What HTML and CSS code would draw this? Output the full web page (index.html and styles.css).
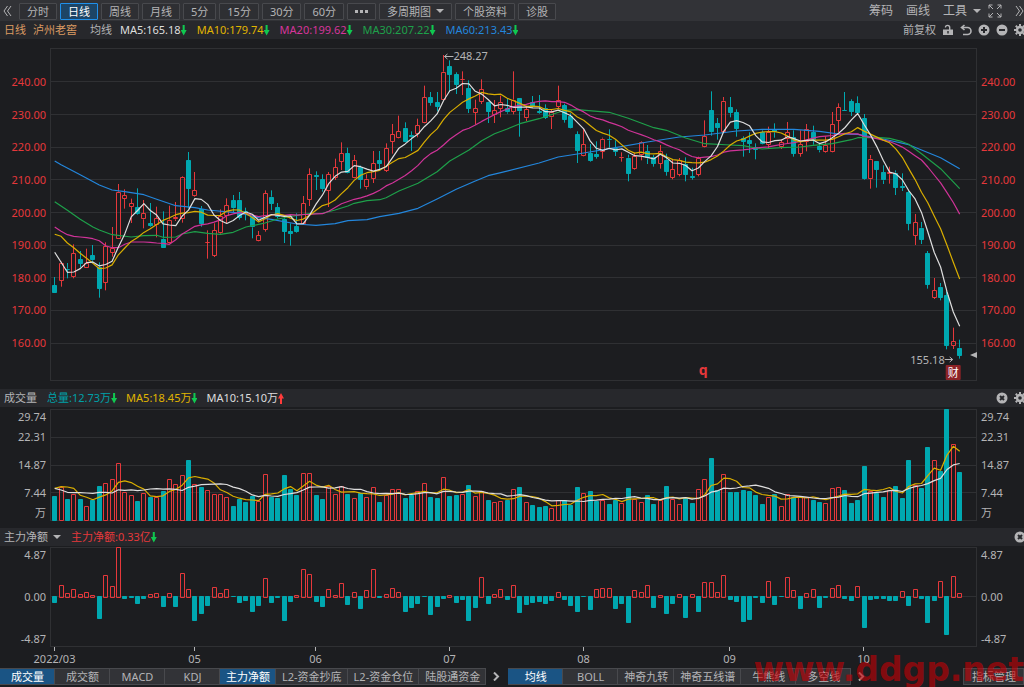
FILE: index.html
```html
<!DOCTYPE html>
<html lang="zh-CN">
  <head>
    <meta charset="UTF-8" />
    <meta name="viewport" content="width=device-width, initial-scale=1.0" />
    <title>泸州老窖 日线</title>
    <link rel="stylesheet" href="styles.css">
  </head>
  <body>
    <!-- Period toolbar -->
    <nav class="toolbar">
      <button class="plain collapse" aria-label="收起">
        <svg width="9" height="12" viewBox="0 0 9 12"><path d="M4.500 1 1 6l3.500 5M8 1 4.500 6 8 11" /></svg>
      </button>
      <div class="periods">
        <button>分时</button>
        <button class="active">日线</button>
        <button>周线</button>
        <button>月线</button>
        <button>5分</button>
        <button>15分</button>
        <button>30分</button>
        <button>60分</button>
        <button class="more" aria-label="更多周期"><i></i><i></i><i></i></button>
        <label class="drop boxed"><select aria-label="多周期图"><option>多周期图</option></select></label>
        <button>个股资料</button>
        <button>诊股</button>
      </div>
      <div class="tools">
        <button class="plain">筹码</button>
        <button class="plain">画线</button>
        <label class="drop"><select aria-label="工具"><option>工具</option></select></label>
        <button class="plain" aria-label="全屏">
          <svg width="14" height="14" viewBox="0 0 14 14"><path d="M1 4.500V1h3.500M1 1l4 4M9.500 1H13v3.500M13 1 9 5M1 9.500V13h3.500M1 13l4-4M13 9.500V13H9.500M13 13 9 9" /></svg>
        </button>
        <button class="plain" aria-label="展开">
          <svg width="9" height="12" viewBox="0 0 9 12"><path d="M1 1l3.500 5L1 11M4.500 1 8 6l-3.500 5" /></svg>
        </button>
      </div>
    </nav>

    <!-- Moving average readings -->
    <header class="info">
      <span class="stock">日线</span>
      <span class="stock">泸州老窖</span>
      <span class="label">均线</span>
      <span class="white">MA5:165.18<b class="down"></b></span>
      <span class="yellow">MA10:179.74<b class="down"></b></span>
      <span class="pink">MA20:199.62<b class="down"></b></span>
      <span class="green">MA30:207.22<b class="down"></b></span>
      <span class="blue">MA60:213.43<b class="down"></b></span>
      <div class="icons">
        <button class="plain">前复权</button>
        <button class="plain" aria-label="锁定">
          <svg class="solid" width="12" height="12" viewBox="0 0 12 12"><path fill-rule="evenodd" d="M1 5.500h6V3.500a1.500 1.500 0 0 0-3 0H2.800a2.800 2.800 0 0 1 5.600 0v2H11V11H1zM5.300 7v2.500h1.400V7z" /></svg>
        </button>
        <button class="plain" aria-label="撤销">
          <svg width="12" height="12" viewBox="0 0 12 12"><path stroke-width="1.600" d="M4.500 1 1.500 3.500l3 2.500M2 3.500h5.500a3.300 3.300 0 0 1 0 7H3" /></svg>
        </button>
        <button class="plain" aria-label="放大">
          <svg class="solid" width="12" height="12" viewBox="0 0 12 12"><circle cx="6" cy="6" r="5.500" /><path class="cut" d="M6 3v6M3 6h6" /></svg>
        </button>
        <button class="plain" aria-label="缩小">
          <svg class="solid" width="12" height="12" viewBox="0 0 12 12"><circle cx="6" cy="6" r="5.500" /><path class="cut" d="M3 6h6" /></svg>
        </button>
        <button class="plain" aria-label="设置">
          <svg width="12" height="12" viewBox="0 0 12 12"><circle cx="6" cy="6" r="3" stroke-width="2.400" /><path stroke-width="2" d="M6 0v2M6 10v2M0 6h2M10 6h2M1.800 1.800l1.400 1.400M8.800 8.800l1.400 1.400M1.800 10.200l1.400-1.400M8.800 3.200l1.400-1.400" /></svg>
        </button>
      </div>
    </header>

    <!-- Candles -->
    <section class="panel price">
      <div class="scale left">
        <span>240.00</span><span>230.00</span><span>220.00</span><span>210.00</span><span>200.00</span><span>190.00</span><span>180.00</span><span>170.00</span><span>160.00</span>
      </div>
      <svg class="plot" id="priceChart"></svg>
      <div class="scale right">
        <span>240.00</span><span>230.00</span><span>220.00</span><span>210.00</span><span>200.00</span><span>190.00</span><span>180.00</span><span>170.00</span><span>160.00</span>
      </div>
    </section>

    <!-- Volume -->
    <header class="info compact">
      <span class="label name">成交量</span>
      <span class="teal">总量:12.73万<b class="down"></b></span>
      <span class="yellow">MA5:18.45万<b class="down"></b></span>
      <span class="white">MA10:15.10万<b class="up"></b></span>
      <div class="icons">
        <button class="plain" aria-label="关闭成交量">
          <svg class="solid" width="12" height="12" viewBox="0 0 12 12"><circle cx="6" cy="6" r="5.500" /><path class="cut" d="M4 4l4 4M8 4 4 8" /></svg>
        </button>
        <button class="plain" aria-label="成交量设置">
          <svg width="12" height="12" viewBox="0 0 12 12"><circle cx="6" cy="6" r="3" stroke-width="2.400" /><path stroke-width="2" d="M6 0v2M6 10v2M0 6h2M10 6h2M1.800 1.800l1.400 1.400M8.800 8.800l1.400 1.400M1.800 10.200l1.400-1.400M8.800 3.200l1.400-1.400" /></svg>
        </button>
      </div>
    </header>
    <section class="panel volume">
      <div class="scale left">
        <span>29.74</span><span>22.31</span><span>14.87</span><span>7.44</span><span>万</span>
      </div>
      <svg class="plot" id="volumeChart"></svg>
      <div class="scale right">
        <span>29.74</span><span>22.31</span><span>14.87</span><span>7.44</span><span>万</span>
      </div>
    </section>

    <!-- Main force net inflow -->
    <header class="info">
      <label class="drop"><select aria-label="指标"><option>主力净额</option></select></label>
      <span class="red">主力净额:0.33亿<b class="down"></b></span>
      <div class="icons">
        <button class="plain" aria-label="关闭主力净额">
          <svg class="solid" width="12" height="12" viewBox="0 0 12 12"><circle cx="6" cy="6" r="5.500" /><path class="cut" d="M4 4l4 4M8 4 4 8" /></svg>
        </button>
      </div>
    </header>
    <section class="panel flow">
      <div class="scale left"><span>4.87</span><span>0.00</span><span>-4.87</span></div>
      <svg class="plot" id="flowChart"></svg>
      <div class="scale right"><span>4.87</span><span>0.00</span><span>-4.87</span></div>
      <svg class="months" id="monthAxis"></svg>
    </section>

    <!-- Indicator tabs -->
    <footer class="tabs">
      <div class="group">
        <button class="active">成交量</button>
        <button>成交额</button>
        <button>MACD</button>
        <button>KDJ</button>
        <button class="active">主力净额</button>
        <button>L2-资金抄底</button>
        <button>L2-资金仓位</button>
        <button>陆股通资金</button>
      </div>
      <button class="next" aria-label="更多指标"><svg width="7" height="9" viewBox="0 0 7 9"><path stroke-width="2" d="M1 0.500 5 4.500 1 8.500" /></svg></button>
      <div class="group">
        <button class="active">均线</button>
        <button>BOLL</button>
        <button>神奇九转</button>
        <button>神奇五线谱</button>
        <button>牛熊线</button>
        <button>多空线</button>
      </div>
      <button class="next" aria-label="更多主图指标"><svg width="7" height="9" viewBox="0 0 7 9"><path stroke-width="2" d="M1 0.500 5 4.500 1 8.500" /></svg></button>
      <button class="manage">指标管理</button>
      <div class="watermark">www.ddgp.net</div>
    </footer>

    <script src="chart.js"></script>
  </body>
</html>
```

FILE: styles.css
```css
/* Page */
* {
  box-sizing: border-box;
}

body {
  margin: 0;
  min-height: 100vh;
  overflow: hidden;
  display: flex;
  flex-direction: column;
  background: #1c1d20;
  color: #b4b4b6;
  font-family: "Noto Sans", "Noto Sans CJK SC", sans-serif;
  font-size: 11px;
  line-height: 16px;
}

button,
select {
  font: inherit;
  color: inherit;
  white-space: nowrap;
  cursor: pointer;
}

svg {
  display: block;
  fill: none;
  stroke: #b4b4b6;
}

svg.solid {
  fill: #b4b4b6;
  stroke: none;
}

svg .cut {
  stroke: #27282c;
  stroke-width: 2;
}

.plain {
  padding: 0;
  border: 0;
  background: none;
}

/* Toolbar */
.toolbar {
  display: flex;
  align-items: center;
  height: 21px;
  padding-top: 1px;
  background: #323337;
}

.collapse {
  margin: 0 7px 0 3px;
}

.periods {
  display: flex;
  gap: 3px;
}

.periods button,
.boxed {
  height: 17px;
  padding: 0 7px;
  border: 1px solid #48494d;
  border-radius: 1px;
  background: #2e2f33;
  line-height: 15px;
}

.periods .active {
  border-color: #2090ea;
  background: #1d4566;
  color: #fff;
}

.periods .more {
  display: flex;
  align-items: center;
  gap: 2px;
}

.more i {
  width: 3px;
  height: 3px;
  background: #b4b4b6;
}

.drop {
  display: flex;
  align-items: center;
  gap: 5px;
}

.drop select {
  appearance: none;
  padding: 0;
  border: 0;
  background: none;
}

.drop::after {
  content: "";
  border: 4px solid transparent;
  border-top-color: #b4b4b6;
  border-bottom: 0;
}

.tools {
  display: flex;
  align-items: center;
  gap: 13px;
  margin-left: auto;
  font-size: 12px;
}

.tools .drop + .plain {
  margin-left: -6px;
}

/* Readings above each chart */
.info {
  display: flex;
  align-items: center;
  gap: 10px;
  height: 18px;
  padding-left: 4px;
  background: #27282c;
}

.compact {
  gap: 9px;
}

.info span {
  display: flex;
  align-items: center;
  white-space: nowrap;
}

.stock { color: #dc9b63; }
.stock + .stock { margin-left: -3px; }
.stock + .label { margin-left: 3px; }
.label + .white { margin-left: -2px; }
.name { margin-right: 1px; }
.white { color: #dedede; }
.yellow { color: #e0b500; }
.pink { color: #d6359b; }
.green { color: #1ea04a; }
.blue { color: #2386dc; }
.teal { color: #00a0a8; }
.red { color: #e5383b; }

.info b {
  width: 6px;
  height: 11px;
  background: #10c850;
  clip-path: polygon(33% 0, 67% 0, 67% 50%, 100% 50%, 50% 100%, 0 50%, 33% 50%);
}

.info .up {
  background: #ff3b3b;
  transform: rotate(180deg);
}

.icons {
  display: flex;
  align-items: center;
  gap: 6px;
  margin-left: auto;
  margin-right: -2px;
}

/* Chart panels */
.panel {
  display: grid;
  grid-template-columns: 50px 1fr 47px;
}

.plot {
  width: 100%;
  height: 100%;
}

.scale {
  display: flex;
  flex-direction: column;
  justify-content: space-between;
}

.left {
  padding-right: 4px;
  text-align: right;
}

.right {
  padding-left: 4px;
}

.price {
  grid-template-rows: 333px;
  padding: 9px 0 8px;
}

.price .scale {
  padding-top: 26px;
  padding-bottom: 30px;
  color: #e5383b;
}

.volume {
  grid-template-rows: 112px;
  padding: 2px 0 7px;
}

.volume .scale {
  display: grid;
  grid-template-columns: 1fr;
  grid-template-rows: 15px 26px 30px 25px 16px;
  align-items: center;
}

.flow {
  grid-template-rows: 100px 21px;
  padding-top: 1px;
}

.months {
  grid-column: 1 / -1;
  width: 100%;
  height: 21px;
}

/* Chart marks */
.grid { stroke: #2f3033; }
.frame { stroke: #2f3033; }
.rise { stroke: #e5383b; }
.fall { stroke: #00a8b0; fill: #00a8b0; }
.line { stroke-width: 1.2; stroke-linejoin: round; }
.line-white { stroke: #dedede; }
.line-yellow { stroke: #d9ae00; }
.line-pink { stroke: #cf3398; }
.line-green { stroke: #1ea04a; }
.line-blue { stroke: #2386dc; }
.pointer { fill: #b4b4b6; stroke: none; }
.badge { fill: #8c2327; stroke: none; }

svg text {
  fill: #b4b4b6;
  stroke: none;
  font-size: 11px;
}

svg .badge-text {
  fill: #fff;
}

svg .mark {
  fill: #e5383b;
  font-size: 14px;
  font-weight: bold;
}

/* Bottom tabs */
.tabs {
  position: relative;
  display: flex;
  align-items: center;
  height: 17px;
}

.group {
  display: flex;
}

.group button,
.manage {
  min-width: 55px;
  height: 17px;
  padding: 0 5px 0 6px;
  border: 1px solid #48494d;
  border-left-width: 0;
  background: #323337;
  line-height: 14px;
}

.group .active {
  background: #1a5484;
  color: #fff;
}

.next {
  padding: 0 8px 0 7px;
  border: 0;
  background: none;
}

.manage {
  min-width: 61px;
  margin-left: auto;
  border-left-width: 1px;
}

/* Site mark lies over the tabs and the month axis */
.watermark {
  position: absolute;
  right: 0;
  bottom: -4px;
  color: rgba(200, 0, 5, 0.62);
  font-family: "DejaVu Sans", sans-serif;
  font-size: 33px;
  font-weight: bold;
  line-height: 38px;
  pointer-events: none;
}
```

FILE: chart.js
```js
// One row per day: direction (1 up, 0 down), high, body top, body bottom, low.
// Levels run downwards from the top of the plot, three to a pixel.
const candles = [
  [0,696,720,745,745],[1,650,653,708,725],[0,654,671,674,700],[1,598,625,696,700],[0,618,643,657,668],
  [1,611,655,668,668],[0,600,630,646,655],[0,652,665,731,758],[1,592,604,713,736],[1,546,608,623,635],
  [1,417,440,583,583],[1,433,451,462,491],[1,461,475,485,534],[0,430,487,508,510],[1,465,505,523,550],
  [0,474,534,543,545],[1,485,520,541,577],[0,499,581,608,608],[1,482,524,593,595],[1,471,516,523,528],
  [1,394,397,523,533],[0,321,346,431,490],[1,381,436,452,455],[0,483,491,536,545],[1,556,591,594,641],
  [1,535,556,632,636],[1,493,514,563,566],[1,460,481,514,534],[0,450,465,490,501],[0,441,464,518,524],
  [0,488,499,502,526],[0,512,515,547,580],[1,558,571,587,589],[1,436,445,555,560],[0,436,455,477,495],
  [0,474,486,516,520],[0,516,521,561,594],[0,535,559,566,602],[0,505,543,562,564],[1,453,475,536,538],
  [1,370,388,464,483],[0,379,390,395,435],[0,388,402,433,440],[1,381,388,438,486],[1,341,366,398,405],
  [1,292,325,350,375],[0,308,325,384,385],[1,330,346,398,400],[0,362,366,405,431],[1,388,401,427,433],
  [1,318,355,401,414],[0,318,346,357,372],[1,295,309,378,381],[1,237,268,290,326],[1,212,259,280,281],
  [0,232,248,291,292],[0,259,271,277,318],[1,221,241,266,277],[1,122,157,233,235],[0,141,156,173,182],
  [0,141,171,185,199],[1,30,80,165,167],[0,46,63,90,141],[0,82,87,120,147],[1,79,102,106,150],
  [0,106,130,192,204],[1,164,190,203,239],[1,103,133,170,177],[0,170,171,201,234],[1,165,196,211,234],
  [1,152,172,192,217],[0,160,190,202,206],[1,79,164,200,208],[0,160,160,199,275],[1,182,193,220,228],
  [0,153,172,185,188],[0,150,198,204,206],[0,178,190,219,222],[1,195,202,217,252],[1,122,166,186,190],
  [0,176,180,225,233],[0,205,212,250,251],[0,259,267,318,354],[1,250,298,334,335],[0,297,324,348,350],
  [0,289,327,336,341],[1,278,281,320,341],[0,253,282,286,308],[0,286,310,321,333],[1,322,335,339,350],
  [0,329,338,387,409],[1,323,332,373,375],[1,289,292,331,346],[0,300,319,340,357],[0,330,337,357,365],
  [1,300,319,356,371],[0,326,344,381,392],[1,345,373,398,403],[1,339,345,389,394],[0,337,357,390,409],
  [0,368,393,398,404],[1,335,339,389,394],[1,226,274,307,308],[0,139,196,262,272],[0,219,234,249,284],
  [1,156,167,260,262],[0,156,186,204,217],[0,193,202,252,275],[0,274,279,291,335],[0,262,286,297,324],
  [0,295,306,315,343],[0,256,262,298,299],[1,245,262,299,311],[0,235,252,262,278],[1,283,291,307,312],
  [1,231,262,283,295],[0,256,276,327,335],[1,256,298,326,335],[1,237,252,290,319],[0,242,261,286,299],
  [0,293,302,316,322],[1,274,299,320,323],[1,201,238,320,322],[1,175,186,227,262],[0,141,195,199,199],
  [0,163,168,201,213],[0,154,174,204,208],[0,207,219,403,405],[1,330,341,403,431],[0,348,349,375,428],
  [0,361,381,406,417],[1,365,382,388,416],[0,376,383,429,450],[0,385,423,429,438],[0,436,441,537,556],
  [1,507,532,572,600],[0,531,548,584,597],[0,618,625,720,731],[1,699,736,758,762],[0,714,725,758,766],
  [0,737,750,902,913],[1,848,889,902,912],[0,884,908,933,941]
];

// Bar tops of the volume chart
const volumes = [
  332,307,343,328,343,363,344,304,294,283,234,322,331,349,325,335,335,318,283,297,
  270,225,297,305,314,328,328,337,362,343,351,332,348,267,335,338,271,313,330,265,
  265,329,343,303,328,303,327,340,325,336,305,351,331,313,313,340,331,317,294,335,
  340,277,332,330,327,301,333,319,346,352,349,345,313,307,352,359,367,364,370,346,
  346,361,307,324,319,348,345,357,345,354,310,341,352,330,357,346,304,343,358,338,
  354,313,283,220,314,267,321,321,315,318,331,357,335,326,363,327,335,335,335,345,
  351,354,310,307,315,354,346,244,317,323,337,316,304,340,225,299,310,187,226,257,
  72,177,262
];

// Net inflow around the zero line
const flows = [
  -21,33,8,20,6,11,3,-68,63,31,147,-10,-7,-24,-10,6,10,-33,8,-33,
  69,22,-74,-54,-30,28,8,22,-4,-22,-14,-47,-30,55,-22,-5,-74,-18,3,82,
  65,-17,-33,20,3,38,-27,11,-38,17,80,-7,6,25,11,-47,-35,-24,-2,-57,
  -32,-10,3,-22,-13,-76,-35,56,-24,6,20,-13,33,-52,-27,-21,-18,-24,-16,11,
  -13,-29,-49,-4,-41,20,25,23,-38,-24,-82,17,11,33,-37,3,-54,-24,6,-66,
  6,-49,41,43,13,62,-13,-18,-78,-73,-5,-21,44,-27,-2,57,17,-38,10,22,
  -35,-5,25,32,-8,-16,30,-95,-13,-10,-10,-16,-16,14,-29,22,-10,-81,-16,46,
  -116,60,10
];

// The long averages as [day, level] points
const ma30 = [
  [0,470],[2,496],[4,523],[6,546],[7,555],[9,569],[12,576],[14,572],[16,571],[17,577],[19,576],[20,567],
  [22,560],[24,565],[26,568],[28,562],[30,546],[32,538],[33,534],[35,522],[38,511],[40,506],[42,505],
  [44,495],[46,483],[47,475],[49,467],[51,464],[52,458],[54,438],[57,415],[60,380],[62,348],[65,315],
  [67,287],[69,266],[71,252],[73,236],[76,221],[80,196],[82,194],[87,202],[90,220],[94,248],[96,256],
  [99,279],[102,296],[106,300],[108,302],[110,309],[111,312],[114,308],[117,306],[119,301],[122,296],
  [125,284],[126,278],[129,277],[131,280],[133,290],[134,298],[136,326],[139,371],[142,431]
];
const ma60 = [
  [0,348],[1,359],[4,389],[7,420],[9,435],[11,440],[14,449],[16,463],[19,482],[22,488],[24,495],[28,502],
  [30,508],[32,518],[34,523],[38,537],[41,541],[44,536],[46,527],[49,524],[51,515],[54,505],[57,490],
  [60,462],[63,433],[66,408],[68,392],[70,383],[76,354],[79,336],[83,324],[88,308],[93,291],[98,276],
  [102,270],[107,258],[111,253],[116,253],[120,259],[123,267],[126,268],[130,282],[134,299],[139,338],[142,371]
];

const months = [[0, "2022/03"], [22, "05"], [41, "06"], [62, "07"], [83, "08"], [106, "09"], [127, "10"]];

// Moving average; the first days come from "seed"
function average(values, days, seed) {
  return values.map((value, i) => {
    if (i < seed.length) return [i, seed[i]];
    const part = values.slice(i - days + 1, i + 1);
    return [i, part.reduce((a, b) => a + b, 0) / days];
  });
}

function dayX(i, width) {
  return 4.7 + (i * (width - 22)) / (candles.length - 1);
}

function polyline(points, width, toY, color) {
  const path = points.map(([i, v]) => `${dayX(i, width).toFixed(1)},${toY(v).toFixed(1)}`).join(" ");
  return `<polyline class="line line-${color}" points="${path}" />`;
}

// Hollow box when rising, filled when falling
function bar(x, top, bottom, rising) {
  const left = Math.round(x - 2.5) + 0.5;
  const y = Math.round(top) + 0.5;
  const height = Math.max(Math.round(bottom) - Math.round(top) - 1, 0);
  return `<path class="${rising ? "rise" : "fall"}" d="M${left} ${y}h4v${height}h-4z" />`;
}

function frame(width, height, lines) {
  let out = `<rect class="frame" x="0.5" y="0.5" width="${width - 1}" height="${height - 1}" />`;
  lines.forEach((y) => {
    out += `<path class="grid" d="M0 ${Math.round(y) + 0.5}H${width}" />`;
  });
  return out;
}

function drawPrice() {
  const svg = document.getElementById("priceChart");
  const width = svg.clientWidth;
  const toY = (v) => (v - 9) / 3;
  const lines = [];
  for (let k = 0; k < 9; k++) lines.push(toY(109 + k * 98));
  let out = frame(width, 333, lines);

  candles.forEach(([rising, high, top, bottom, low], i) => {
    const x = dayX(i, width);
    const mid = Math.round(x - 2.5) + 2.5;
    const cls = rising ? "rise" : "fall";
    out += `<path class="${cls}" d="M${mid} ${toY(high)}V${toY(top)}M${mid} ${toY(bottom)}V${toY(low)}" />`;
    out += bar(x, toY(top), toY(bottom), rising);
  });

  const closes = candles.map((c) => (c[0] ? c[2] : c[3]));
  out += polyline(ma60, width, toY, "blue");
  out += polyline(ma30, width, toY, "green");
  out += polyline(average(closes, 20, [546,559,569,574,576,578,581,587,602,608,608,598,591,591,591,592,594,595,598]), width, toY, "pink");
  out += polyline(average(closes, 10, [568,574,594,608,625,640,655,671,669]), width, toY, "yellow");
  out += polyline(average(closes, 5, [622,652,682,681]), width, toY, "white");

  // Highest and lowest price, event marks
  const peak = dayX(61, width);
  const last = dayX(142, width);
  const event = dayX(102, width);
  out += `<path d="M${peak + 1} 8.500h9M${peak + 4} 6l-3 2.500 3 2.500" />`;
  out += `<text x="${peak + 10}" y="12">248.27</text>`;
  out += `<text x="${last - 15}" y="316" text-anchor="end">155.18</text>`;
  out += `<path d="M${last - 15} 311.500h8M${last - 10} 309l3 2.500-3 2.500" />`;
  out += `<text class="mark" x="${event - 6}" y="327">q</text>`;
  out += `<rect class="badge" x="${last - 14}" y="317" width="15" height="15" rx="1" />`;
  out += `<text class="badge-text" x="${last - 12}" y="329">财</text>`;
  out += `<path class="pointer" d="M${width} 304v6l-7-3z" />`;
  svg.innerHTML = out;
}

function drawVolume() {
  const svg = document.getElementById("volumeChart");
  const width = svg.clientWidth;
  const toY = (v) => (v - 72) / 3;
  let out = frame(width, 112, [157, 241, 322].map(toY));
  volumes.forEach((v, i) => {
    out += bar(dayX(i, width), toY(v), 112, candles[i][0]);
  });
  out += polyline(average(volumes, 5, [310,305,306,310]), width, toY, "yellow");
  out += polyline(average(volumes, 10, [310,315,322,323,323,324,325,322,322]), width, toY, "white");
  svg.innerHTML = out;
}

function drawFlow() {
  const svg = document.getElementById("flowChart");
  const width = svg.clientWidth;
  let out = frame(width, 100, [49]);
  flows.forEach((v, i) => {
    const x = dayX(i, width);
    out += v > 0 ? bar(x, 49 - v / 3, 51, true) : bar(x, 49, 49 - v / 3, false);
  });
  svg.innerHTML = out;
}

function drawMonths() {
  const width = document.getElementById("flowChart").clientWidth;
  let out = "";
  months.forEach(([day, name]) => {
    const x = Math.round(50 + dayX(day, width)) - 0.5;
    out += `<path d="M${x} 0v4" /><text x="${x}" y="16" text-anchor="middle">${name}</text>`;
  });
  document.getElementById("monthAxis").innerHTML = out;
}

function drawAll() {
  drawPrice();
  drawVolume();
  drawFlow();
  drawMonths();
}

window.addEventListener("resize", drawAll);
drawAll();
```
